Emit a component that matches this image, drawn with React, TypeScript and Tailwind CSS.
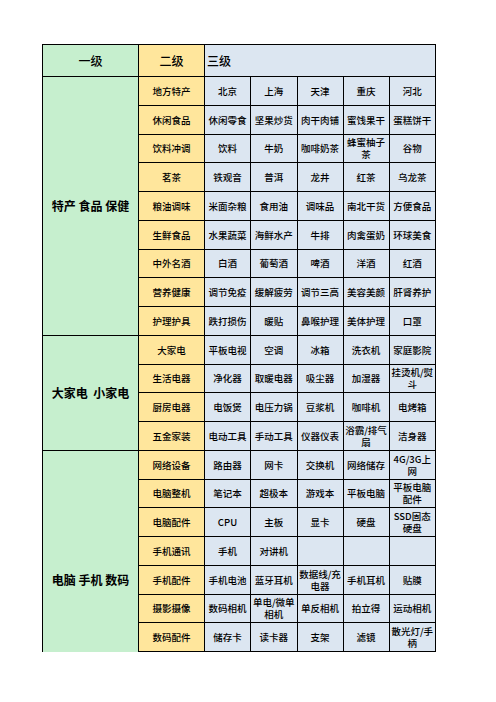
import React from 'react';

interface Section {
  title: string;
  titleClass: string;
  rows: { name: string; items: string[] }[];
}

const sections: Section[] = [
  {
    title: '特产 食品 保健',
    titleClass: 'align-middle',
    rows: [
      { name: '地方特产', items: ['北京', '上海', '天津', '重庆', '河北'] },
      { name: '休闲食品', items: ['休闲零食', '坚果炒货', '肉干肉铺', '蜜饯果干', '蛋糕饼干'] },
      { name: '饮料冲调', items: ['饮料', '牛奶', '咖啡奶茶', '蜂蜜柚子茶', '谷物'] },
      { name: '茗茶', items: ['铁观音', '普洱', '龙井', '红茶', '乌龙茶'] },
      { name: '粮油调味', items: ['米面杂粮', '食用油', '调味品', '南北干货', '方便食品'] },
      { name: '生鲜食品', items: ['水果蔬菜', '海鲜水产', '牛排', '肉禽蛋奶', '环球美食'] },
      { name: '中外名酒', items: ['白酒', '葡萄酒', '啤酒', '洋酒', '红酒'] },
      { name: '营养健康', items: ['调节免疫', '缓解疲劳', '调节三高', '美容美颜', '肝肾养护'] },
      { name: '护理护具', items: ['跌打损伤', '暖贴', '鼻喉护理', '美体护理', '口罩'] },
    ],
  },
  {
    title: '大家电  小家电',
    titleClass: 'align-middle',
    rows: [
      { name: '大家电', items: ['平板电视', '空调', '冰箱', '洗衣机', '家庭影院'] },
      { name: '生活电器', items: ['净化器', '取暖电器', '吸尘器', '加湿器', '挂烫机/熨斗'] },
      { name: '厨房电器', items: ['电饭煲', '电压力锅', '豆浆机', '咖啡机', '电烤箱'] },
      { name: '五金家装', items: ['电动工具', '手动工具', '仪器仪表', '浴霸/排气扇', '洁身器'] },
    ],
  },
  {
    title: '电脑 手机 数码',
    titleClass: 'align-middle pt-[58px] border-b-0',
    rows: [
      { name: '网络设备', items: ['路由器', '网卡', '交换机', '网络储存', '4G/3G上网'] },
      { name: '电脑整机', items: ['笔记本', '超极本', '游戏本', '平板电脑', '平板电脑配件'] },
      { name: '电脑配件', items: ['CPU', '主板', '显卡', '硬盘', 'SSD固态硬盘'] },
      { name: '手机通讯', items: ['手机', '对讲机', '', '', ''] },
      { name: '手机配件', items: ['手机电池', '蓝牙耳机', '数据线/充电器', '手机耳机', '贴膜'] },
      { name: '摄影摄像', items: ['数码相机', '单电/微单相机', '单反相机', '拍立得', '运动相机'] },
      { name: '数码配件', items: ['储存卡', '读卡器', '支架', '滤镜', '散光灯/手柄'] },
    ],
  },
];

const cell = 'border border-black p-0 px-px text-center align-middle leading-[12px] text-[9.5px] font-medium text-black';

const App: React.FC = () => {
  return (
    <div
      className="min-h-screen bg-white pt-[44px] pl-[42px]"
      style={{ fontFamily: '"Noto Sans CJK SC", "Noto Sans", sans-serif' }}
    >
      <table className="table-fixed border-collapse">
        <colgroup>
          <col className="w-[96px]" />
          <col className="w-[66px]" />
          <col className="w-[46px]" />
          <col className="w-[46.5px]" />
          <col className="w-[46px]" />
          <col className="w-[46px]" />
          <col className="w-[46.5px]" />
        </colgroup>
        <tbody>
          <tr className="h-[32px]">
            <td className="border border-black bg-[#c6efce] text-center align-middle text-[12px] font-medium text-black">一级</td>
            <td className="border border-black bg-[#ffe69c] text-center align-middle text-[12px] font-medium text-black">二级</td>
            <td colSpan={5} className="border border-black bg-[#dce6f1] pl-[2px] text-left align-middle text-[12px] font-medium text-black">
              三级
            </td>
          </tr>
          {sections.map((section) =>
            section.rows.map((row, i) => (
              <tr key={row.name} className="h-[28.75px]">
                {i === 0 && (
                  <td
                    rowSpan={section.rows.length}
                    className={`border border-black bg-[#c6efce] text-center text-[12px] font-bold whitespace-pre text-black ${section.titleClass}`}
                  >
                    {section.title}
                  </td>
                )}
                <td className={`${cell} bg-[#ffe69c]`}>{row.name}</td>
                {row.items.map((item, j) => (
                  <td key={j} className={`${cell} bg-[#dce6f1]`}>
                    {item}
                  </td>
                ))}
              </tr>
            ))
          )}
        </tbody>
      </table>
    </div>
  );
};

export default App;
